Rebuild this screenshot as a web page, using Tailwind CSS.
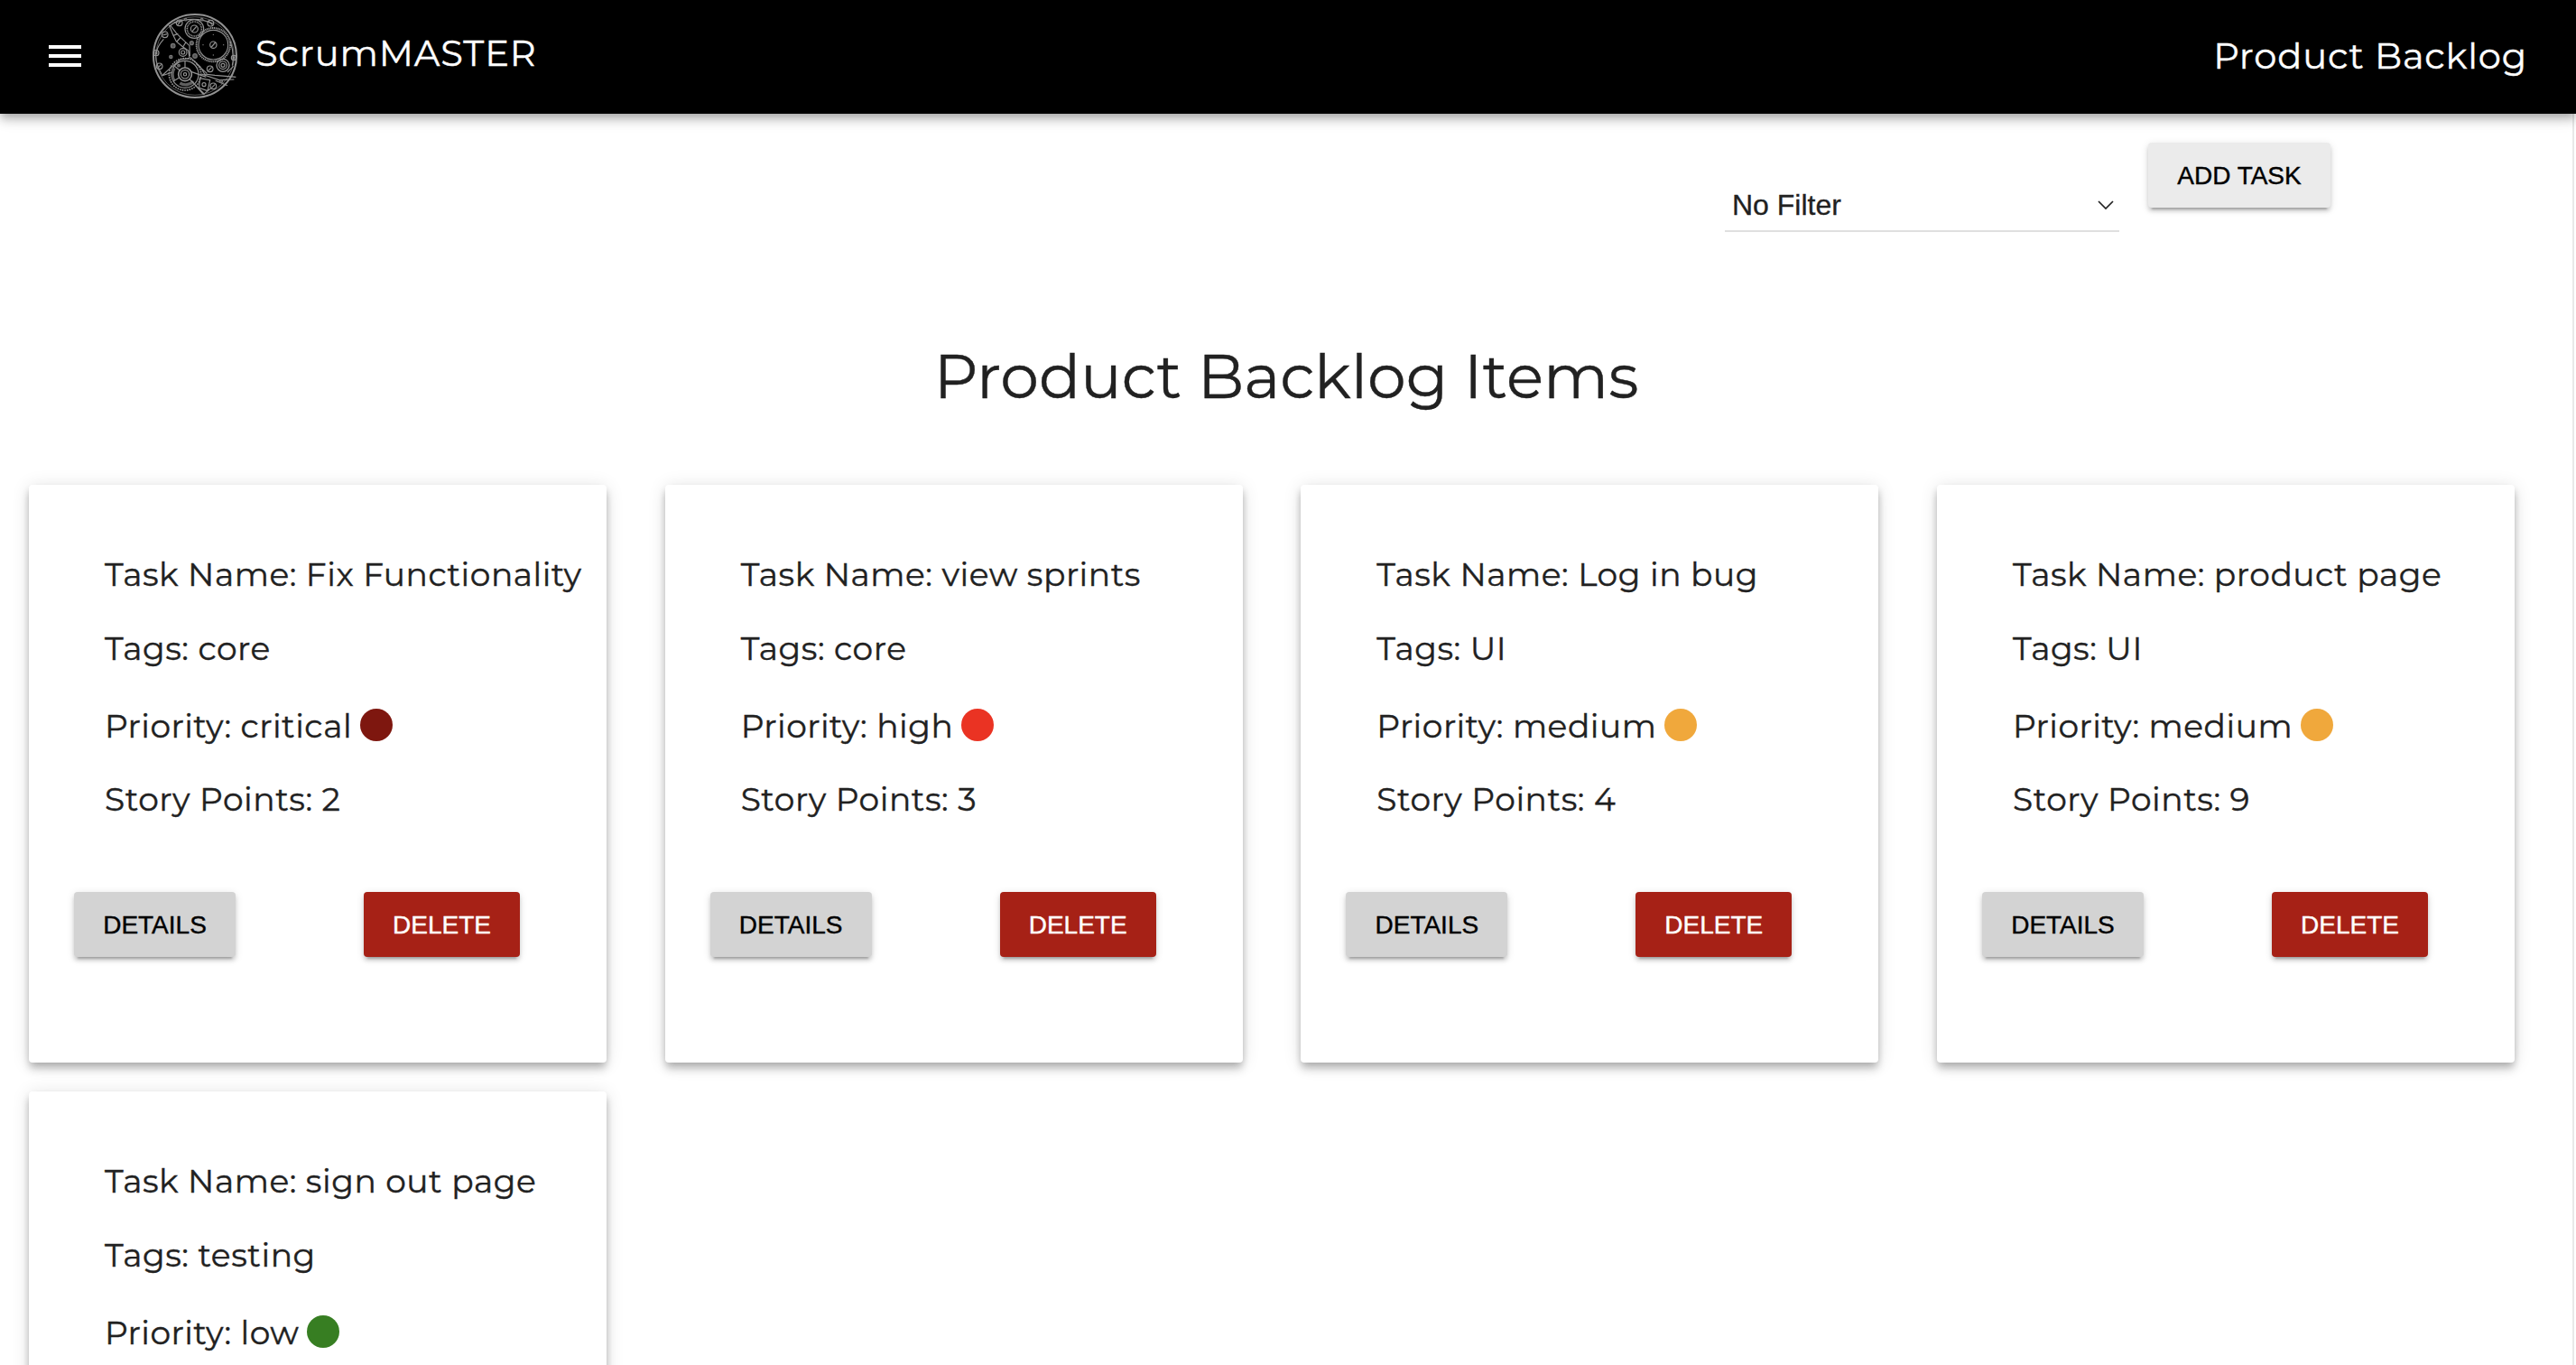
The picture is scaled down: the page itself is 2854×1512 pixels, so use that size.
<!DOCTYPE html>
<html lang="en">
<head>
<meta charset="utf-8">
<title>ScrumMASTER</title>
<script src="https://cdn.jsdelivr.net/npm/@tailwindcss/browser@4"></script>
</head>
<body class="h-[1512px] w-[2854px] overflow-hidden bg-white font-['Montserrat','Inter',sans-serif] text-[#212121]">
<div class="flex h-full flex-col">

<header class="relative z-10 flex h-[126px] shrink-0 bg-black text-[40px] leading-[44px] tracking-[0.85px] text-white shadow-[0_4px_8px_-2px_rgba(0,0,0,0.2),0_8px_10px_0_rgba(0,0,0,0.14),0_2px_20px_0_rgba(0,0,0,0.12)] [-webkit-text-stroke:0.4px]">
  <button class="ml-[54px] mt-[50px] flex h-6 w-9 flex-col justify-between" aria-label="Menu">
    <span class="h-1 w-full bg-white"></span><span class="h-1 w-full bg-white"></span><span class="h-1 w-full bg-white"></span>
  </button>
  <svg class="ml-[70px] mt-[10px] h-[108px] w-[112px]" viewBox="0 0 336 324" fill="none" stroke="#929292" stroke-width="3.5">
    <circle cx="168" cy="156" r="138" stroke-width="6"/>
    <circle cx="168" cy="156" r="130" stroke-width="2.5" stroke="#666"/>
    <!-- barrel wheel -->
    <circle cx="229" cy="119" r="56" stroke-width="6" stroke-dasharray="4 2"/>
    <circle cx="229" cy="119" r="49"/>
    <circle cx="229" cy="119" r="11"/><path d="M222 127l14-16" stroke-width="4"/>
    <g fill="#868686" stroke="none"><circle cx="195" cy="119" r="2"/><circle cx="263" cy="119" r="2"/><circle cx="229" cy="85" r="2"/><circle cx="229" cy="153" r="2"/></g>
    <!-- crown wheel -->
    <circle cx="166" cy="66" r="31"/>
    <circle cx="166" cy="66" r="24" stroke-width="5" stroke-dasharray="3 2"/>
    <circle cx="166" cy="66" r="12"/><path d="M159 74l14-16" stroke-width="4"/>
    <!-- balance wheel -->
    <circle cx="135" cy="217" r="53" stroke-width="5" stroke-dasharray="5 3"/>
    <circle cx="135" cy="217" r="45"/>
    <path d="M99 196a42 42 0 0 0 0 42M118 246a34 34 0 0 0 44-6" stroke-width="10" stroke="#5f5f5f"/>
    <circle cx="135" cy="217" r="22" stroke-width="5"/>
    <circle cx="135" cy="217" r="14"/><circle cx="135" cy="217" r="5"/>
    <path d="M135 195v-22M116 228l-20 12M150 233l50 50M158 240l38 44M155 208l50 18M118 204l-18-14"/>
    <!-- small wheel -->
    <circle cx="261" cy="187" r="21" stroke-width="4"/><circle cx="261" cy="187" r="13"/><circle cx="261" cy="187" r="6"/>
    <!-- bridges -->
    <path d="M82 54l14 34 10 20 22 18 18 12 4 26M86 54l20 26 14 14 30 28 1 34M96 88l16-6M108 108l12-14M128 126l10-16"/>
    <path d="M150 164l-30 4-34 28-28 26M152 160l34 32 14 24 34 4 70 6M172 182l36 32M190 216l58 20 50-2M58 222l34-12"/>
    <path d="M184 230l34 6-8 36-28-10zM236 238l40 16M196 284l24-20"/>
    <path d="M64 100q-24 26-26 52t20 66M100 46q66-26 132 4M84 56l20-14M286 108q14 44 6 80M276 210l20-20"/>
    <circle cx="198" cy="251" r="6"/>
    <!-- screws -->
    <circle cx="116" cy="46" r="10"/><path d="M110 53l12-14"/>
    <circle cx="220" cy="47" r="10"/><path d="M214 41l12 12"/>
    <circle cx="68" cy="85" r="10"/><path d="M61 87l14-4"/>
    <circle cx="39" cy="146" r="9"/><circle cx="39" cy="146" r="3"/>
    <circle cx="50" cy="190" r="10"/><path d="M44 196l12-12"/>
    <circle cx="218" cy="199" r="10"/><path d="M212 205l12-12"/>
    <circle cx="229" cy="256" r="10"/><path d="M223 262l12-12"/>
    <circle cx="297" cy="162" r="8"/><circle cx="297" cy="162" r="3"/>
    <circle cx="128" cy="144" r="13"/><circle cx="128" cy="144" r="6"/>
    <g fill="#555" stroke="#777"><circle cx="95" cy="122" r="7"/><circle cx="88" cy="159" r="5"/><circle cx="157" cy="113" r="6"/><circle cx="168" cy="156" r="7"/><circle cx="255" cy="240" r="5"/><circle cx="137" cy="35" r="4"/><circle cx="191" cy="35" r="4"/><circle cx="114" cy="188" r="4"/></g>
  </svg>
  <div class="ml-[11px] mt-[37px]">ScrumMASTER</div>
  <div class="ml-auto mr-[54px] mt-10">Product Backlog</div>
</header>

<main class="mr-[2px] h-[1386px] border-r-2 border-[#e8e8e8]">
  <div class="flex h-[132px] items-start justify-end pr-[268px] pt-8 font-['Liberation_Sans',Arial,sans-serif]">
    <div class="mt-[39px] flex h-[60px] w-[437px] items-center justify-between border-b-2 border-[#dfdfdf] pl-2 pr-[6px] pt-[2px] text-[32px]">
      <span class="[-webkit-text-stroke:0.3px]">No Filter</span>
      <svg class="h-[10px] w-[18px]" viewBox="0 0 18 10" fill="none" stroke="#212121" stroke-width="1.7"><path d="M1 1l8 8 8-8"/></svg>
    </div>
    <button class="ml-8 h-[72px] w-[202px] rounded-[4px] bg-[#ebebeb] pt-px text-[28px] text-black shadow-[0_6px_2px_-4px_rgba(0,0,0,0.2),0_4px_4px_0_rgba(0,0,0,0.14),0_2px_10px_0_rgba(0,0,0,0.12)] [-webkit-text-stroke:0.4px]">ADD TASK</button>
  </div>

  <h1 class="mt-[119px] text-center text-[68px] leading-[80px] [-webkit-text-stroke:0.4px]">Product Backlog Items</h1>

  <section class="mt-[80px] grid grid-cols-[repeat(4,640px)] gap-x-[64.67px] gap-y-8 pl-8 text-[36px] leading-[42px] tracking-[0.54px]">

    <article class="h-[640px] rounded-[4px] bg-white pt-[78px] shadow-[0_4px_8px_-2px_rgba(0,0,0,0.2),0_8px_10px_0_rgba(0,0,0,0.14),0_2px_20px_0_rgba(0,0,0,0.12)]">
      <div class="whitespace-nowrap pl-[84px] [-webkit-text-stroke:0.4px]">
        <p>Task Name: Fix Functionality</p>
        <p class="mt-10">Tags: core</p>
        <p class="mt-[44px] flex items-center gap-[8.5px]">Priority: critical<span class="mb-[2px] size-9 rounded-full bg-[#7e170f]"></span></p>
        <p class="mt-[39px]">Story Points: 2</p>
      </div>
      <div class="mt-[82px] flex gap-[142px] pl-[50px] font-['Liberation_Sans',Arial,sans-serif] text-[28px] tracking-normal">
        <button class="h-[72px] w-[179px] rounded-[4px] bg-[#d3d3d3] pt-px text-black shadow-[0_6px_2px_-4px_rgba(0,0,0,0.2),0_4px_4px_0_rgba(0,0,0,0.14),0_2px_10px_0_rgba(0,0,0,0.12)] [-webkit-text-stroke:0.4px]">DETAILS</button>
        <button class="h-[72px] w-[173px] rounded-[4px] bg-[#a62116] pt-px text-white shadow-[0_6px_2px_-4px_rgba(0,0,0,0.2),0_4px_4px_0_rgba(0,0,0,0.14),0_2px_10px_0_rgba(0,0,0,0.12)] [-webkit-text-stroke:0.4px]">DELETE</button>
      </div>
    </article>

    <article class="h-[640px] rounded-[4px] bg-white pt-[78px] shadow-[0_4px_8px_-2px_rgba(0,0,0,0.2),0_8px_10px_0_rgba(0,0,0,0.14),0_2px_20px_0_rgba(0,0,0,0.12)]">
      <div class="whitespace-nowrap pl-[84px] [-webkit-text-stroke:0.4px]">
        <p>Task Name: view sprints</p>
        <p class="mt-10">Tags: core</p>
        <p class="mt-[44px] flex items-center gap-[8.5px]">Priority: high<span class="mb-[2px] size-9 rounded-full bg-[#ea3323]"></span></p>
        <p class="mt-[39px]">Story Points: 3</p>
      </div>
      <div class="mt-[82px] flex gap-[142px] pl-[50px] font-['Liberation_Sans',Arial,sans-serif] text-[28px] tracking-normal">
        <button class="h-[72px] w-[179px] rounded-[4px] bg-[#d3d3d3] pt-px text-black shadow-[0_6px_2px_-4px_rgba(0,0,0,0.2),0_4px_4px_0_rgba(0,0,0,0.14),0_2px_10px_0_rgba(0,0,0,0.12)] [-webkit-text-stroke:0.4px]">DETAILS</button>
        <button class="h-[72px] w-[173px] rounded-[4px] bg-[#a62116] pt-px text-white shadow-[0_6px_2px_-4px_rgba(0,0,0,0.2),0_4px_4px_0_rgba(0,0,0,0.14),0_2px_10px_0_rgba(0,0,0,0.12)] [-webkit-text-stroke:0.4px]">DELETE</button>
      </div>
    </article>

    <article class="h-[640px] rounded-[4px] bg-white pt-[78px] shadow-[0_4px_8px_-2px_rgba(0,0,0,0.2),0_8px_10px_0_rgba(0,0,0,0.14),0_2px_20px_0_rgba(0,0,0,0.12)]">
      <div class="whitespace-nowrap pl-[84px] [-webkit-text-stroke:0.4px]">
        <p>Task Name: Log in bug</p>
        <p class="mt-10">Tags: UI</p>
        <p class="mt-[44px] flex items-center gap-[8.5px]">Priority: medium<span class="mb-[2px] size-9 rounded-full bg-[#f0a83c]"></span></p>
        <p class="mt-[39px]">Story Points: 4</p>
      </div>
      <div class="mt-[82px] flex gap-[142px] pl-[50px] font-['Liberation_Sans',Arial,sans-serif] text-[28px] tracking-normal">
        <button class="h-[72px] w-[179px] rounded-[4px] bg-[#d3d3d3] pt-px text-black shadow-[0_6px_2px_-4px_rgba(0,0,0,0.2),0_4px_4px_0_rgba(0,0,0,0.14),0_2px_10px_0_rgba(0,0,0,0.12)] [-webkit-text-stroke:0.4px]">DETAILS</button>
        <button class="h-[72px] w-[173px] rounded-[4px] bg-[#a62116] pt-px text-white shadow-[0_6px_2px_-4px_rgba(0,0,0,0.2),0_4px_4px_0_rgba(0,0,0,0.14),0_2px_10px_0_rgba(0,0,0,0.12)] [-webkit-text-stroke:0.4px]">DELETE</button>
      </div>
    </article>

    <article class="h-[640px] rounded-[4px] bg-white pt-[78px] shadow-[0_4px_8px_-2px_rgba(0,0,0,0.2),0_8px_10px_0_rgba(0,0,0,0.14),0_2px_20px_0_rgba(0,0,0,0.12)]">
      <div class="whitespace-nowrap pl-[84px] [-webkit-text-stroke:0.4px]">
        <p>Task Name: product page</p>
        <p class="mt-10">Tags: UI</p>
        <p class="mt-[44px] flex items-center gap-[8.5px]">Priority: medium<span class="mb-[2px] size-9 rounded-full bg-[#f0a83c]"></span></p>
        <p class="mt-[39px]">Story Points: 9</p>
      </div>
      <div class="mt-[82px] flex gap-[142px] pl-[50px] font-['Liberation_Sans',Arial,sans-serif] text-[28px] tracking-normal">
        <button class="h-[72px] w-[179px] rounded-[4px] bg-[#d3d3d3] pt-px text-black shadow-[0_6px_2px_-4px_rgba(0,0,0,0.2),0_4px_4px_0_rgba(0,0,0,0.14),0_2px_10px_0_rgba(0,0,0,0.12)] [-webkit-text-stroke:0.4px]">DETAILS</button>
        <button class="h-[72px] w-[173px] rounded-[4px] bg-[#a62116] pt-px text-white shadow-[0_6px_2px_-4px_rgba(0,0,0,0.2),0_4px_4px_0_rgba(0,0,0,0.14),0_2px_10px_0_rgba(0,0,0,0.12)] [-webkit-text-stroke:0.4px]">DELETE</button>
      </div>
    </article>

    <article class="h-[640px] rounded-[4px] bg-white pt-[78px] shadow-[0_4px_8px_-2px_rgba(0,0,0,0.2),0_8px_10px_0_rgba(0,0,0,0.14),0_2px_20px_0_rgba(0,0,0,0.12)]">
      <div class="whitespace-nowrap pl-[84px] [-webkit-text-stroke:0.4px]">
        <p>Task Name: sign out page</p>
        <p class="mt-10">Tags: testing</p>
        <p class="mt-[44px] flex items-center gap-[8.5px]">Priority: low<span class="mb-[2px] size-9 rounded-full bg-[#377e22]"></span></p>
      </div>
    </article>

  </section>
</main>
</div>
</body>
</html>
